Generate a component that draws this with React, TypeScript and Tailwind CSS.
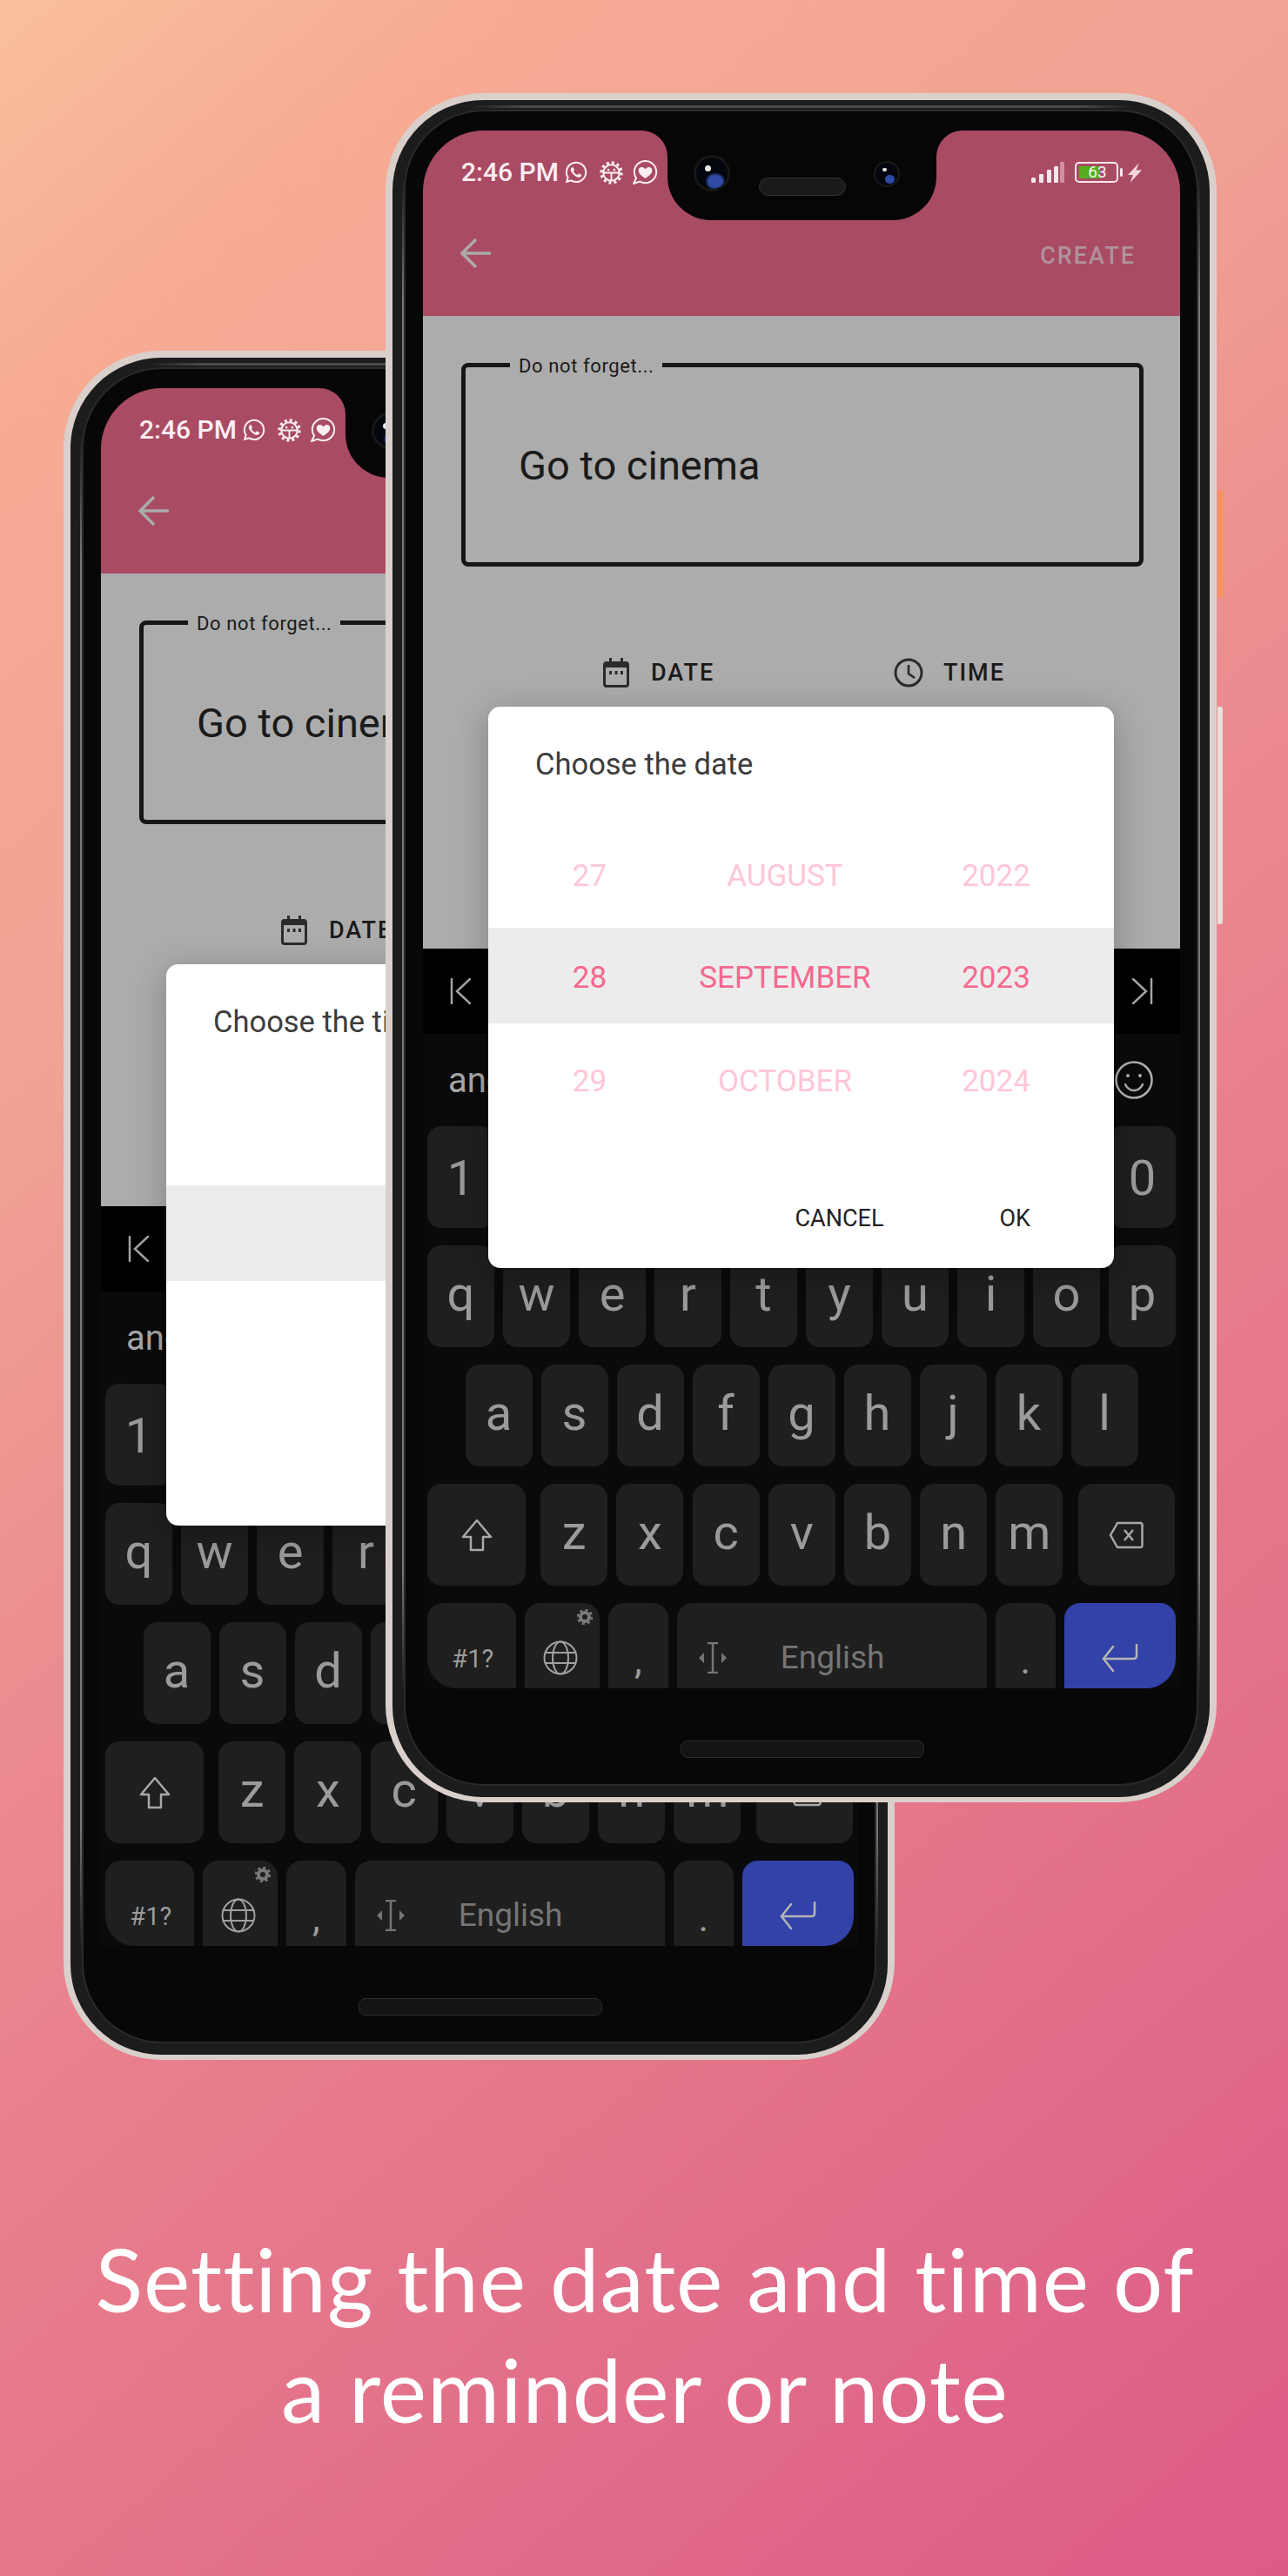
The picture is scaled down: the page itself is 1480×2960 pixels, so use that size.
import { FaWhatsapp } from 'react-icons/fa'

const row1 = ['1', '2', '3', '4', '5', '6', '7', '8', '9', '0']
const row2 = ['q', 'w', 'e', 'r', 't', 'y', 'u', 'i', 'o', 'p']
const row3 = ['a', 's', 'd', 'f', 'g', 'h', 'j', 'k', 'l']
const row4 = ['z', 'x', 'c', 'v', 'b', 'n', 'm']

const dateRows = [
  ['27', 'AUGUST', '2022'],
  ['28', 'SEPTEMBER', '2023'],
  ['29', 'OCTOBER', '2024'],
]

function GearBug({ className }: { className?: string }) {
  return (
    <svg viewBox="0 0 28 28" fill="none" stroke="currentColor" className={className}>
      <circle cx="14" cy="14" r="12" strokeWidth="3.4" strokeDasharray="3.1 3.18" />
      <circle cx="14" cy="14" r="9.6" strokeWidth="2.2" />
      <path d="M5 14h18M14 14v9" strokeWidth="2" />
      <circle cx="10.5" cy="10.5" r="1.3" fill="currentColor" stroke="none" />
      <circle cx="17.5" cy="10.5" r="1.3" fill="currentColor" stroke="none" />
    </svg>
  )
}

function HeartBubble({ className }: { className?: string }) {
  return (
    <svg viewBox="0 0 30 30" fill="none" className={className}>
      <path
        d="M15.5 2C8.5 2 2.8 7.6 2.8 14.5c0 2.7.9 5.2 2.3 7.2L2 28l7-2.4c1.9 1 4.100 1.600 6.500 1.600 7 0 12.700-5.700 12.700-12.700S22.500 2 15.500 2z"
        stroke="currentColor"
        strokeWidth="2"
        strokeLinejoin="round"
      />
      <path
        d="M15.500 22c-6-4.200-7.800-6.500-7.800-9.100 0-2.300 1.700-3.900 3.800-3.900 1.600 0 3.100.9 4 2.500.9-1.600 2.400-2.500 4-2.500 2.100 0 3.800 1.600 3.800 3.900 0 2.600-1.800 4.900-7.800 9.100z"
        fill="currentColor"
      />
    </svg>
  )
}

function Signal() {
  return (
    <svg viewBox="0 0 38 24" className="w-[38px] h-[24px]">
      <rect x="0" y="18" width="5" height="6" rx="1.500" fill="#f9e6ec" />
      <rect x="9" y="14" width="5" height="10" rx="1" fill="#f9e6ec" />
      <rect x="18" y="9" width="5" height="15" rx="1" fill="#f9e6ec" />
      <rect x="26" y="5" width="5" height="19" rx="1" fill="#f9e6ec" />
      <rect x="33" y="0" width="5" height="24" rx="1" fill="#f9e6ec" opacity="0.45" />
    </svg>
  )
}

function Battery() {
  return (
    <div className="relative flex items-center w-[55px] h-[24px]">
      <div className="w-[50px] h-[24px] rounded-[5px] border-[2px] border-[#f9e6ec] p-[3px] flex">
        <div className="w-[24px] bg-[#55ad1f] rounded-[1px]" />
      </div>
      <div className="ml-[2px] w-[3px] h-[10px] rounded-sm bg-[#f9e6ec]" />
      <span className="absolute left-[14px] top-0 w-[24px] text-center text-[19px] leading-[24px] text-[#f3f7ea]">63</span>
    </div>
  )
}

function Bolt() {
  return (
    <svg viewBox="0 0 16 23" className="w-[16px] h-[23px]">
      <path d="M13 0L0 14h6l-3.500 9L16 8.500H9.500z" fill="#f4d5de" />
    </svg>
  )
}

function Notch() {
  return (
    <>
      <svg viewBox="0 0 369 103" className="absolute left-[251px] top-0 w-[369px] h-[103px]">
        <path
          d="M0 0A30 30 0 0 1 30 30V53A50 50 0 0 0 80 103H289A50 50 0 0 0 339 53V30A30 30 0 0 1 369 0Z"
          fill="#060606"
        />
      </svg>
      <div className="absolute left-[311px] top-[28px] w-[42px] h-[42px] rounded-full bg-[#04060d] border-[3px] border-[#171717] overflow-hidden">
        <div className="absolute left-[12px] top-[19px] w-[20px] h-[17px] rounded-full bg-[#2f4ba5] blur-[1px]" />
        <div className="absolute left-[10px] top-[9px] w-[7px] h-[7px] rounded-full bg-[#e8e8e8] blur-[0.5px]" />
      </div>
      <div className="absolute left-[386px] top-[54px] w-[100px] h-[21px] rounded-full bg-[#1a1a1a] border border-[#333]" />
      <div className="absolute left-[518px] top-[35px] w-[30px] h-[30px] rounded-full bg-[#04060d] border-[2px] border-[#1a1a1a] overflow-hidden">
        <div className="absolute left-[11px] top-[14px] w-[11px] h-[10px] rounded-full bg-[#2f4ba5] blur-[0.5px]" />
        <div className="absolute left-[8px] top-[6px] w-[5px] h-[4px] rounded-full bg-[#e8e8e8]" />
      </div>
    </>
  )
}

function CalendarIcon() {
  return (
    <svg viewBox="0 0 30 34" className="w-[30px] h-[34px]">
      <path d="M7 0h3v4h10V0h3v4h3a4 4 0 0 1 4 4v22a4 4 0 0 1-4 4H4a4 4 0 0 1-4-4V8a4 4 0 0 1 4-4h3z" fill="#2b2b2b" />
      <rect x="3" y="11" width="24" height="20" rx="1" fill="#acacac" />
      <rect x="7" y="15" width="3" height="4" fill="#2b2b2b" />
      <rect x="13.500" y="15" width="3" height="4" fill="#2b2b2b" />
      <rect x="20" y="15" width="3" height="4" fill="#2b2b2b" />
    </svg>
  )
}

function ClockIcon() {
  return (
    <svg viewBox="0 0 34 34" fill="none" stroke="#2b2b2b" className="w-[34px] h-[34px]">
      <circle cx="17" cy="17" r="15" strokeWidth="3" />
      <path d="M17 8v10l7 5" strokeWidth="2.600" />
    </svg>
  )
}

function DateDialog({ title, rows }: { title: string; rows: string[][] }) {
  return (
    <div className="absolute left-[75px] top-[662px] w-[719px] h-[645px] bg-white rounded-[14px] shadow-[0_8px_40px_rgba(0,0,0,0.25)] overflow-hidden">
      <div className="pt-[46px] pl-[54px] h-[86px] text-[34.5px] leading-[40px] text-[#3c3c3c] whitespace-nowrap">{title}</div>
      <div className="mt-[51px] flex flex-col gap-[7px]">
        <PickerRow row={rows[0]} className="pt-[7px] text-[#ffc6d6]" />
        <PickerRow row={rows[1]} className="pt-[6px] bg-[#ececec] text-[#f5688f]" />
        <PickerRow row={rows[2]} className="pt-[11px] text-[#ffc6d6]" />
      </div>
      <div className="mt-[87px] flex justify-end gap-[133px] pr-[96px] text-[27px] leading-[40px] text-[#222]">
        <span>CANCEL</span>
        <span>OK</span>
      </div>
    </div>
  )
}

function PickerRow({ row, className }: { row?: string[]; className: string }) {
  return (
    <div className={`flex items-center h-[110px] text-[35px] ${className}`}>
      <div className="w-[233px] text-center">{row?.[0]}</div>
      <div className="w-[216px] text-center">{row?.[1]}</div>
      <div className="w-[269px] text-center">{row?.[2]}</div>
    </div>
  )
}

function Key({ label, digit }: { label: string; digit?: boolean }) {
  return (
    <div
      className={
        digit
          ? 'w-[77px] h-[117px] rounded-[16px] bg-[#1f1f1f] flex items-center justify-center pt-[2px] text-[56px] text-[#9b9b9b]'
          : 'w-[77px] h-[117px] rounded-[16px] bg-[#1f1f1f] flex items-center justify-center pb-[5px] text-[56px] text-[#9b9b9b]'
      }
    >
      {label}
    </div>
  )
}

function Keyboard() {
  return (
    <div className="flex-1 bg-[#0a0a0a] flex flex-col">
      <div className="h-[98px] bg-black flex items-center justify-between px-[31px]">
        <svg viewBox="0 0 24 30" fill="none" stroke="#a5a5a5" strokeWidth="2.500" strokeLinecap="round" className="w-[24px] h-[30px]">
          <path d="M2 1v28M23 1L8 15l15 14" />
        </svg>
        <svg viewBox="0 0 24 30" fill="none" stroke="#a5a5a5" strokeWidth="2.500" strokeLinecap="round" className="w-[24px] h-[30px]">
          <path d="M22 1v28M1 1l15 14L1 29" />
        </svg>
      </div>
      <div className="h-[106px] flex items-center justify-between pl-[29px] pr-[31px]">
        <span className="pt-[2px] text-[40px] leading-none text-[#a8a8a8]">and</span>
        <svg viewBox="0 0 44 44" fill="none" stroke="#b0b0b0" strokeWidth="2.500" className="w-[44px] h-[44px]">
          <circle cx="22" cy="22" r="20.500" />
          <circle cx="15" cy="17" r="2" fill="#b0b0b0" stroke="none" />
          <circle cx="29" cy="17" r="2" fill="#b0b0b0" stroke="none" />
          <path d="M12 27c2.500 5 6 7 10 7s7.500-2 10-7" strokeLinecap="round" />
        </svg>
      </div>
      <div className="px-[5px] flex flex-col gap-[20px]">
        <div className="flex gap-[10px]">
          {row1.map((k) => (
            <Key key={k} label={k} digit />
          ))}
        </div>
        <div className="flex gap-[10px]">
          {row2.map((k) => (
            <Key key={k} label={k} />
          ))}
        </div>
        <div className="flex gap-[10px] justify-center">
          {row3.map((k) => (
            <Key key={k} label={k} />
          ))}
        </div>
        <div className="flex gap-[10.2px]">
          <div className="w-[113px] h-[117px] mr-[7px] rounded-[16px] bg-[#1f1f1f] flex items-center justify-center">
            <svg viewBox="0 0 36 38" fill="none" stroke="#a8a8a8" strokeWidth="2.500" strokeLinejoin="round" className="w-[36px] h-[38px]">
              <path d="M18 2L2 21h9v15h14V21h9z" />
            </svg>
          </div>
          {row4.map((k) => (
            <Key key={k} label={k} />
          ))}
          <div className="w-[111px] h-[117px] ml-[7.4px] rounded-[16px] bg-[#1f1f1f] flex items-center justify-center">
            <svg viewBox="0 0 40 32" fill="none" stroke="#a8a8a8" strokeWidth="2.500" strokeLinejoin="round" className="w-[40px] h-[32px]">
              <path d="M10 2h27a2 2 0 0 1 1.500 2v24a2 2 0 0 1-1.500 2H10L2 16z" />
              <path d="M18 10l10 12M28 10L18 22" />
            </svg>
          </div>
        </div>
        <div className="flex gap-[10px] text-[#9b9b9b]">
          <div className="w-[103px] h-[98px] rounded-t-[18px] rounded-bl-[34px] bg-[#1f1f1f] flex items-end justify-center pb-[14px] pl-[2px] text-[29px] leading-[40px]">
            #1?
          </div>
          <div className="relative w-[86px] h-[98px] rounded-t-[18px] bg-[#1f1f1f] flex items-end justify-center pb-[15px] pr-[4px]">
            <svg viewBox="0 0 40 40" fill="none" stroke="#a0a0a0" strokeWidth="2" className="w-[40px] h-[40px]">
              <circle cx="20" cy="20" r="18.500" />
              <ellipse cx="20" cy="20" rx="9" ry="18.500" />
              <path d="M3 14h34M3 26h34" />
            </svg>
            <svg viewBox="0 0 18 18" className="absolute right-[8px] top-[7px] w-[18px] h-[18px]">
              <circle cx="9" cy="9" r="5" fill="none" stroke="#7a7a7a" strokeWidth="4" />
              <circle cx="9" cy="9" r="8" fill="none" stroke="#7a7a7a" strokeWidth="2.500" strokeDasharray="3 3.300" />
            </svg>
          </div>
          <div className="w-[69px] h-[98px] rounded-t-[18px] bg-[#1f1f1f] flex items-end justify-center text-[44px] leading-[64px]">,</div>
          <div className="w-[358px] h-[98px] rounded-t-[18px] bg-[#1f1f1f] flex items-center pt-[28px] pl-[23px]">
            <svg viewBox="0 0 36 36" fill="none" stroke="#757575" strokeWidth="2.500" className="w-[36px] h-[36px]">
              <path d="M12 1h12M12 35h12M18 1v34" />
              <path d="M2 18l6-6v12zM34 18l-6-6v12z" fill="#757575" stroke="none" />
            </svg>
            <span className="ml-[60px] text-[37px] text-[#757575]">English</span>
          </div>
          <div className="w-[69px] h-[98px] rounded-t-[18px] bg-[#1f1f1f] flex items-end justify-center text-[44px] leading-[64px]">.</div>
          <div className="w-[129px] h-[98px] rounded-t-[18px] rounded-br-[34px] bg-[#3342a8] flex items-end justify-center pb-[19px]">
            <svg viewBox="0 0 42 32" fill="none" stroke="#b5b5b5" strokeWidth="2.500" strokeLinecap="round" className="w-[42px] h-[32px]">
              <path d="M40 1v13a3 3 0 0 1-3 3H2M13 3L2 17l11 14" />
            </svg>
          </div>
        </div>
      </div>
    </div>
  )
}

function Phone({ title, rows, className }: { title: string; rows: string[][]; className: string }) {
  return (
    <div className={`absolute w-[955px] h-[1964px] ${className}`}>
      <div className="absolute left-[956px] top-[456px] w-[7px] h-[124px] rounded-r-[4px] bg-[#f9925f]" />
      <div className="absolute left-[956px] top-[705px] w-[6px] h-[250px] rounded-r-[3px] bg-[#e6e1dd]" />
      <div className="relative h-full rounded-[112px] bg-[#d9d0cc] pt-[8px] px-[8px] pb-[6px]">
        <div className="relative h-full rounded-[104px] bg-[#1c1c1c] px-[15px] pt-[13px] pb-[15px]">
          <div className="absolute left-[11px] top-[90px] bottom-[120px] w-[3px] bg-[linear-gradient(to_bottom,transparent,#777_8%,#777_92%,transparent)]" />
          <div className="absolute right-[11px] top-[90px] bottom-[120px] w-[3px] bg-[linear-gradient(to_bottom,transparent,#777_8%,#777_92%,transparent)]" />
          <div className="absolute left-[90px] right-[90px] top-[6px] h-[3px] bg-[linear-gradient(to_right,transparent,#4a4a4a_8%,#4a4a4a_92%,transparent)]" />
          <div className="relative h-full rounded-[90px] bg-[#070707] pt-[22px] pl-[20px] pr-[19px] flex flex-col shadow-[0_0_0_2px_#2a2a2a]">
            <div className="relative w-[870px] h-[1790px] rounded-t-[70px] overflow-hidden flex flex-col font-['Roboto',sans-serif]">
              <div className="h-[213px] bg-[#a94b63] pl-[44px] pr-[44px] flex flex-col">
                <div className="h-[96px] flex items-center justify-between">
                  <div className="flex items-center text-[#fbeef2]">
                    <span className="text-[30px] font-medium leading-none w-[118px] whitespace-nowrap">2:46 PM</span>
                    <FaWhatsapp className="w-[28px] h-[28px]" />
                    <GearBug className="w-[27px] h-[27px] ml-[13px]" />
                    <HeartBubble className="w-[30px] h-[30px] ml-[10px]" />
                  </div>
                  <div className="flex items-center">
                    <Signal />
                    <div className="ml-[12px]">
                      <Battery />
                    </div>
                    <div className="ml-[6px]">
                      <Bolt />
                    </div>
                  </div>
                </div>
                <div className="h-[92px] pb-[3px] flex items-center justify-between pr-[7px]">
                  <svg viewBox="0 0 36 36" fill="none" stroke="#ababab" strokeWidth="3.500" className="w-[36px] h-[36px] -ml-[2px]">
                    <path d="M36 18H3M19 2L3 18l16 16" />
                  </svg>
                  <span className="pt-[8px] text-[27px] font-medium tracking-[2px] text-[#b0929c]">CREATE</span>
                </div>
              </div>
              <Notch />
              <div className="h-[727px] bg-[#acacac] pt-[54px] px-[44px] text-[#1a1a1a]">
                <div className="relative w-[784px] h-[234px] rounded-[8px] border-[5px] border-[#161616] flex items-center pl-[61px] pt-[3px] text-[47px]">
                  <span className="absolute left-[51px] -top-[16px] h-[30px] bg-[#acacac] px-[10px] text-[22px] leading-[30px] tracking-[0.6px]">
                    Do not forget...
                  </span>
                  Go to cinema
                </div>
                <div className="mt-[102px] ml-[163px] flex items-center">
                  <div className="w-[334px] flex items-center gap-[25px]">
                    <CalendarIcon />
                    <span className="text-[27px] font-medium tracking-[2px]">DATE</span>
                  </div>
                  <div className="flex items-center gap-[23px]">
                    <ClockIcon />
                    <span className="text-[27px] font-medium tracking-[2px]">TIME</span>
                  </div>
                </div>
              </div>
              <Keyboard />
              <DateDialog title={title} rows={rows} />
            </div>
            <div className="mt-[60px] ml-[296px] w-[280px] h-[20px] rounded-[8px] bg-[#141414] border border-[#2c2c2c]" />
          </div>
        </div>
      </div>
    </div>
  )
}

export default function App() {
  return (
    <div className="w-[1480px] h-[2960px] overflow-hidden flex flex-col bg-[linear-gradient(140deg,#f9c09e_0%,#f7ab94_11%,#f1a294_31%,#ec8c90_47%,#e87f8c_60%,#dd5f87_95%,#dc5c86_100%)]">
      <div className="relative h-[2555px]">
        <Phone title="Choose the time" rows={[]} className="left-[73px] top-[403px]" />
        <Phone title="Choose the date" rows={dateRows} className="left-[443px] top-[107px]" />
      </div>
      <div className="pl-[2px] text-center text-white text-[101px] leading-[127px] tracking-[1px] font-['Lato',sans-serif] [font-variant-ligatures:none]">
        <div>Setting the date and time of</div>
        <div>a reminder or note</div>
      </div>
    </div>
  )
}
